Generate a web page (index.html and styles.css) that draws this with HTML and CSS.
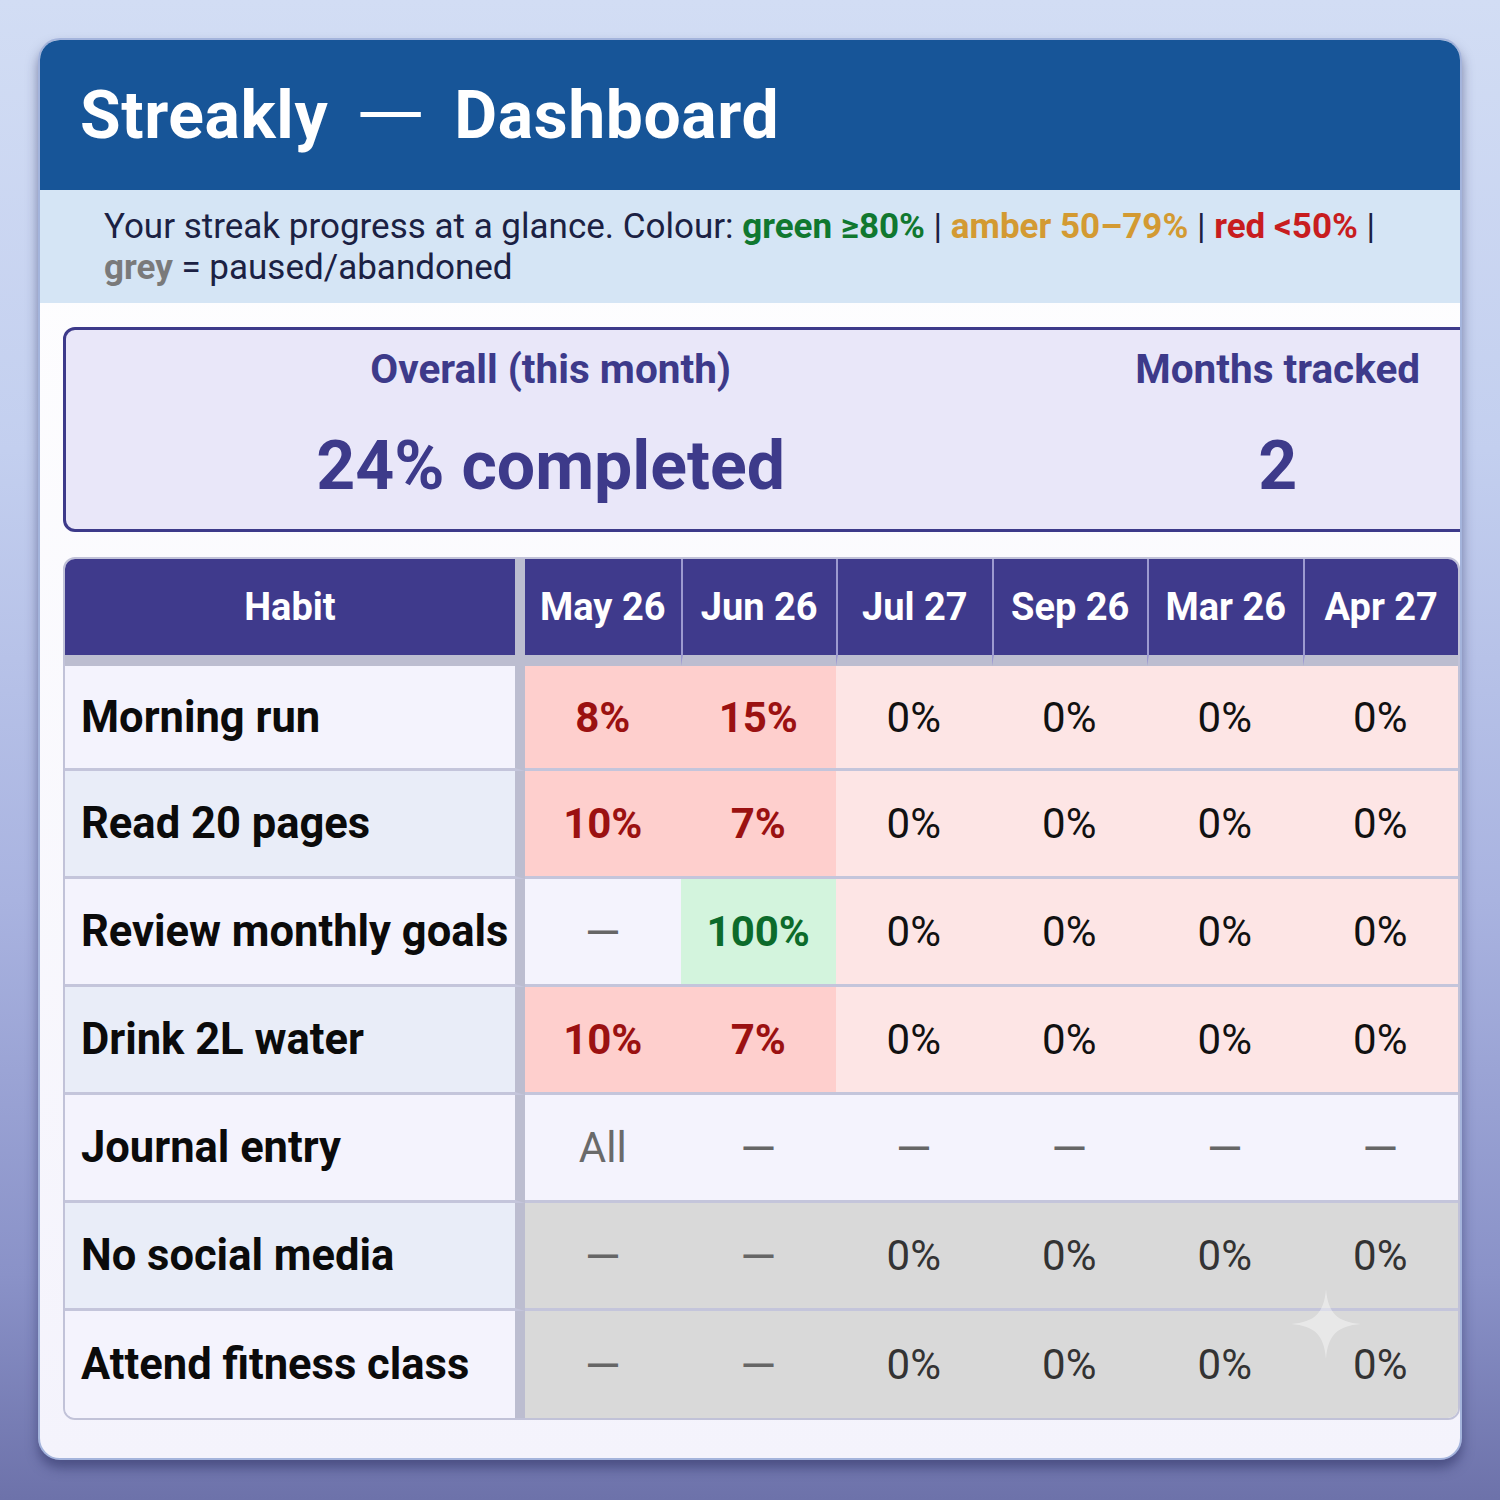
FILE: index.html
```html
<!DOCTYPE html>
<html lang="en">
<head>
<meta charset="utf-8">
<title>Streakly — Dashboard</title>
<link rel="stylesheet" href="styles.css">
</head>
<body>
<div class="card">
  <header class="hdr">
    <h1 class="title">Streakly<span class="dash">—</span>Dashboard</h1>
  </header>
  <div class="sub">
    <p>Your streak progress at a glance. Colour: <b class="c-green">green ≥80%</b> | <b class="c-amber">amber 50–79%</b> | <b class="c-red">red &lt;50%</b> | <b class="c-grey">grey</b> = paused/abandoned</p>
  </div>
  <div class="content">
    <section class="summary">
      <div class="stat">
        <div class="stat-label">Overall (this month)</div>
        <div class="stat-value">24% completed</div>
      </div>
      <div class="stat">
        <div class="stat-label">Months tracked</div>
        <div class="stat-value">2</div>
      </div>
    </section>
    <div class="table-wrap">
      <table class="grid">
        <colgroup>
          <col class="col-habit">
          <col><col><col><col><col><col>
        </colgroup>
        <thead>
          <tr>
            <th class="habit">Habit</th>
            <th class="m first">May 26</th>
            <th class="m">Jun 26</th>
            <th class="m">Jul 27</th>
            <th class="m">Sep 26</th>
            <th class="m">Mar 26</th>
            <th class="m">Apr 27</th>
          </tr>
        </thead>
        <tbody>
          <tr class="odd first-row">
            <td class="habit">Morning run</td>
            <td class="red">8%</td><td class="red">15%</td>
            <td class="pink">0%</td><td class="pink">0%</td><td class="pink">0%</td><td class="pink">0%</td>
          </tr>
          <tr class="even">
            <td class="habit">Read 20 pages</td>
            <td class="red">10%</td><td class="red">7%</td>
            <td class="pink">0%</td><td class="pink">0%</td><td class="pink">0%</td><td class="pink">0%</td>
          </tr>
          <tr class="odd">
            <td class="habit">Review monthly goals</td>
            <td class="none"><span class="em">—</span></td><td class="green">100%</td>
            <td class="pink">0%</td><td class="pink">0%</td><td class="pink">0%</td><td class="pink">0%</td>
          </tr>
          <tr class="even">
            <td class="habit">Drink 2L water</td>
            <td class="red">10%</td><td class="red">7%</td>
            <td class="pink">0%</td><td class="pink">0%</td><td class="pink">0%</td><td class="pink">0%</td>
          </tr>
          <tr class="odd">
            <td class="habit">Journal entry</td>
            <td class="none all">All</td>
            <td class="none"><span class="em">—</span></td><td class="none"><span class="em">—</span></td><td class="none"><span class="em">—</span></td><td class="none"><span class="em">—</span></td><td class="none"><span class="em">—</span></td>
          </tr>
          <tr class="even">
            <td class="habit">No social media</td>
            <td class="grey"><span class="em">—</span></td><td class="grey"><span class="em">—</span></td>
            <td class="grey">0%</td><td class="grey">0%</td><td class="grey">0%</td><td class="grey">0%</td>
          </tr>
          <tr class="odd last">
            <td class="habit">Attend fitness class</td>
            <td class="grey"><span class="em">—</span></td><td class="grey"><span class="em">—</span></td>
            <td class="grey">0%</td><td class="grey">0%</td><td class="grey">0%</td><td class="grey">0%</td>
          </tr>
        </tbody>
      </table>
    </div>
  </div>
  <svg class="sparkle" viewBox="0 0 70 70" width="70" height="70" aria-hidden="true">
    <path d="M35 0 C37 24 46 33 70 35 C46 37 37 46 35 70 C33 46 24 37 0 35 C24 33 33 24 35 0 Z"/>
  </svg>
</div>
</body>
</html>
```
FILE: styles.css
```css
* { box-sizing: border-box; }

html, body {
  margin: 0;
  padding: 0;
}

body {
  width: 1500px;
  height: 1500px;
  padding: 38px;
  font-family: Roboto, "Liberation Sans", Arial, sans-serif;
  background: linear-gradient(180deg, #d2ddf4 0%, #c3cfef 30%, #a9b3e0 60%, #8a92c8 85%, #6d72aa 100%);
}

.card {
  position: relative;
  width: 1424px;
  height: 1422px;
  border: 2px solid #a4b4dc;
  border-radius: 22px;
  overflow: hidden;
  background: linear-gradient(180deg, #ffffff 0%, #f4f3fc 100%);
  box-shadow: 0 8px 12px rgba(35, 40, 90, 0.5);
}

.hdr {
  height: 150px;
  background: #175598;
  display: flex;
  align-items: center;
  padding-left: 40px;
}

.title {
  margin: 0;
  color: #ffffff;
  font-size: 66px;
  font-weight: 700;
  letter-spacing: 0.6px;
}

.title .dash {
  display: inline-block;
  font-weight: 400;
  width: 61px;
  margin: 0 39px 0 26px;
  transform: scaleX(1.4);
  transform-origin: left center;
}

.sub {
  height: 113px;
  background: #d5e5f5;
  padding: 16px 40px 0 64px;
}

.sub p {
  margin: 0;
  font-size: 35px;
  line-height: 41px;
  color: #1b2143;
}

.sub b { font-weight: 700; }
.c-green { color: #10782f; }
.c-amber { color: #d39a32; }
.c-red { color: #c81d1f; }
.c-grey { color: #7a7a7a; }

.content {
  padding: 24px 0 0 23px;
}

.summary {
  width: 1460px;
  height: 205px;
  border: 3px solid #3d3a8a;
  border-radius: 12px;
  background: #e9e7f9;
  display: grid;
  grid-template-columns: 2fr 1fr;
  padding-top: 16px;
}

.stat {
  display: flex;
  flex-direction: column;
  align-items: center;
  color: #3d3a8a;
}

.stat-label {
  font-size: 40.5px;
  font-weight: 700;
  line-height: 46px;
}

.stat-value {
  margin-top: 34px;
  font-size: 68px;
  font-weight: 700;
  line-height: 80px;
}

.table-wrap {
  margin-top: 25px;
  width: 1397px;
  border: 2px solid #c1c2d8;
  border-radius: 12px;
  overflow: hidden;
}

.grid {
  width: 100%;
  border-collapse: separate;
  border-spacing: 0;
  table-layout: fixed;
}

.col-habit { width: 460px; }

.grid th {
  height: 107px;
  background: #3f3a8c;
  color: #ffffff;
  font-size: 38px;
  font-weight: 700;
  text-align: center;
  padding: 0;
  border-bottom: 11px solid #bcbdd0;
}

.grid th.m + th.m {
  border-left: 2px solid #9d9ad0;
}

.grid th.habit,
.grid td.habit {
  border-right: 10px solid #bcbdd0;
}

.grid td {
  height: 108px;
  padding: 0;
  text-align: center;
  font-size: 42px;
  font-weight: 400;
  color: #111111;
  border-bottom: 3px solid #c4c5db;
}

.grid tr.first-row td {
  height: 105px;
}

.grid tr.last td {
  border-bottom: none;
  height: 107px;
}

.grid td.habit {
  text-align: left;
  padding-left: 16px;
  font-weight: 700;
  font-size: 43.5px;
  color: #0b0b0b;
  white-space: nowrap;
}

.grid tr.odd td.habit { background: #f4f3fd; }
.grid tr.even td.habit { background: #e9edf8; }

.grid td.red {
  background: #fecfcd;
  color: #9b1111;
  font-weight: 700;
}

.grid td.pink {
  background: #fde5e5;
}

.grid td.green {
  background: #d3f4dd;
  color: #0c6b2b;
  font-weight: 700;
}

.grid td.none {
  background: #f4f3fd;
}

.grid td.grey {
  background: #d9d9d9;
  color: #333333;
}

.grid td.all {
  color: #6a6a6a;
}

.em {
  display: inline-block;
  color: #666666;
  font-size: 46px;
  line-height: 1;
  transform: translateY(3px);
}

.sparkle {
  position: absolute;
  left: 1251px;
  top: 1249px;
  fill: rgba(255, 255, 255, 0.4);
}
```
